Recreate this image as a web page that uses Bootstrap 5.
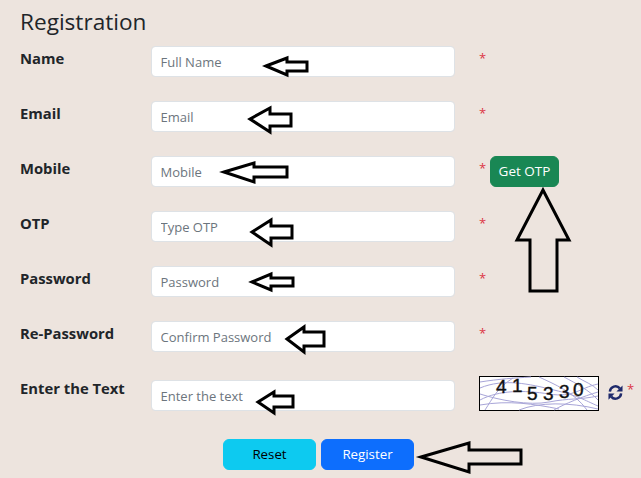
<!DOCTYPE html>
<html lang="en">
<head>
    <meta charset="UTF-8">
    <meta name="viewport" content="width=device-width, initial-scale=1.0">
    <title>Registration</title>
    <link href="https://cdn.jsdelivr.net/npm/bootstrap@5.3.0/dist/css/bootstrap.min.css" rel="stylesheet">
    <style>
        html, body {
            height: 100%;
            overflow: hidden;
        }
        body {
            background-color: #ede4de;
            font-family: "Open Sans", "Noto Sans", sans-serif;
            color: #212529;
            position: relative;
        }
        .page-wrap {
            padding: 7px 0 0 20px;
        }
        .page-title {
            font-size: 22.6px;
            line-height: 30px;
            font-weight: 400;
            margin: 0 0 9px;
            color: #212529;
        }
        .reg-row {
            height: 31px;
            margin-bottom: 24px;
        }
        .reg-row.captcha-row {
            height: 35px;
            margin-top: 24px;
            margin-bottom: 0;
        }
        .reg-label {
            width: 131px;
            flex: none;
            font-size: 14.8px;
            font-weight: 700;
            line-height: 24px;
            margin: 0;
        }
        .reg-input {
            width: 304px;
            flex: none;
            height: 31px;
            min-height: 31px;
            padding: 0 9px 0 8.5px;
            font-size: 13px;
            border-radius: 4px;
        }
        .reg-input::placeholder {
            color: #6c757d;
        }
        .captcha-row .reg-input {
            margin-top: 4px;
        }
        .req-star {
            color: #dc3545;
            font-size: 13px;
            line-height: 18px;
            width: 11px;
            margin: 3px 0 0 24px;
            flex: none;
        }
        .otp-btn {
            width: 69px;
            height: 31px;
            padding: 0;
            font-size: 13.5px;
            margin-left: 0;
        }
        .captcha-pic {
            display: block;
            width: 120px;
            height: 35px;
            margin-left: 24px;
            flex: none;
        }
        .refresh-icon {
            display: block;
            width: 15px;
            height: 15px;
            margin: 9px 0 0 9px;
            flex: none;
        }
        .captcha-star {
            color: #dc3545;
            font-size: 13px;
            line-height: 18px;
            margin: 4px 0 0 4px;
        }
        .form-actions {
            margin-top: 28px;
            padding-left: 203px;
            gap: 5px;
        }
        .form-actions .btn {
            width: 93px;
            height: 31px;
            padding: 0;
            font-size: 13.3px;
        }
        .arrow-layer {
            position: absolute;
            left: 0;
            top: 0;
            pointer-events: none;
        }
        .arrow-layer polygon {
            fill: none;
            stroke: #000;
            stroke-width: 3;
            stroke-linejoin: miter;
        }
    </style>
</head>
<body>
    <div class="page-wrap">
        <h1 class="page-title">Registration</h1>
        <form>
            <div class="reg-row d-flex align-items-start">
                <label class="reg-label" for="fullname">Name</label>
                <input type="text" class="form-control reg-input" id="fullname" placeholder="Full Name">
                <span class="req-star">*</span>
            </div>
            <div class="reg-row d-flex align-items-start">
                <label class="reg-label" for="email">Email</label>
                <input type="text" class="form-control reg-input" id="email" placeholder="Email">
                <span class="req-star">*</span>
            </div>
            <div class="reg-row d-flex align-items-start">
                <label class="reg-label" for="mobile">Mobile</label>
                <input type="text" class="form-control reg-input" id="mobile" placeholder="Mobile">
                <span class="req-star">*</span>
                <button type="button" class="btn btn-success otp-btn">Get OTP</button>
            </div>
            <div class="reg-row d-flex align-items-start">
                <label class="reg-label" for="otp">OTP</label>
                <input type="text" class="form-control reg-input" id="otp" placeholder="Type OTP">
                <span class="req-star">*</span>
            </div>
            <div class="reg-row d-flex align-items-start">
                <label class="reg-label" for="password">Password</label>
                <input type="password" class="form-control reg-input" id="password" placeholder="Password">
                <span class="req-star">*</span>
            </div>
            <div class="reg-row d-flex align-items-start">
                <label class="reg-label" for="repassword">Re-Password</label>
                <input type="password" class="form-control reg-input" id="repassword" placeholder="Confirm Password">
                <span class="req-star">*</span>
            </div>
            <div class="reg-row captcha-row d-flex align-items-start">
                <label class="reg-label" for="captcha">Enter the Text</label>
                <input type="text" class="form-control reg-input" id="captcha" placeholder="Enter the text">
                <svg class="captcha-pic" viewBox="0 0 120 35" xmlns="http://www.w3.org/2000/svg">
                    <rect x="0.5" y="0.5" width="119" height="34" fill="#fff" stroke="#000"/>
                    <g fill="none" stroke="#a8a5d8" stroke-width="1">
                        <path d="M1 12C25 2 50 8 75 14S105 24 119 30"/>
                        <path d="M1 24C20 14 45 14 70 18S100 12 119 8"/>
                        <path d="M1 29C30 24 55 28 80 33"/>
                        <path d="M1 18C20 24 50 30 70 26S100 24 119 20"/>
                        <path d="M6 34C14 22 18 12 34 2"/>
                        <path d="M60 1C75 8 95 16 108 34"/>
                        <path d="M85 1C98 8 110 14 119 24"/>
                        <path d="M1 6C20 3 35 2 52 1"/>
                        <path d="M40 34C60 26 90 26 119 33"/>
                        <path d="M98 1C106 6 113 8 119 14"/>
                        <path d="M75 34C85 28 105 20 119 16"/>
                    </g>
                    <g fill="#111" font-family="Liberation Sans, sans-serif" font-size="19" stroke="#111" stroke-width="0.4">
                        <text x="17" y="17">4</text>
                        <text x="33" y="16">1</text>
                        <text x="48" y="24">5</text>
                        <text x="64" y="24">3</text>
                        <text x="80" y="22">3</text>
                        <text x="94" y="20">0</text>
                    </g>
                </svg>
                <svg class="refresh-icon" viewBox="0 0 16 16" xmlns="http://www.w3.org/2000/svg">
                    <g fill="none" stroke="#1f2a6b" stroke-width="2.6">
                        <path d="M2 7A6 6 0 0 1 12.6 3.6"/>
                        <path d="M14 9A6 6 0 0 1 3.4 12.4"/>
                    </g>
                    <path fill="#1f2a6b" d="M15.5 0.4V7H9zM.5 15.6V9H7z"/>
                </svg>
                <span class="captcha-star">*</span>
            </div>
            <div class="form-actions d-flex">
                <button type="reset" class="btn btn-info">Reset</button>
                <button type="submit" class="btn btn-primary">Register</button>
            </div>
        </form>
    </div>

    <svg class="arrow-layer" width="641" height="478" xmlns="http://www.w3.org/2000/svg">
        <polygon points="266,66 287,58 287,62 307,62 307,71 287,71 287,75"/>
        <polygon points="250,119 270,108 270,114 291,114 291,126 270,126 270,132"/>
        <polygon points="224,172 254,163 254,167 287,167 287,177 254,177 254,182"/>
        <polygon points="252,232 271,220 271,226 292,226 292,238 271,238 271,245"/>
        <polygon points="252,282 271,274 271,278 293,278 293,286 271,286 271,290"/>
        <polygon points="287,339 304,327 304,332 324,332 324,346 304,346 304,352"/>
        <polygon points="258,402 274,392 274,396 293,396 293,407 274,407 274,413"/>
        <polygon points="543,190 517,240 530,240 530,291 557,291 557,240 569,240"/>
        <polygon points="421,457 469,443 469,450 521,450 521,464 469,464 469,472"/>
    </svg>

    <script src="https://cdn.jsdelivr.net/npm/bootstrap@5.3.0/dist/js/bootstrap.bundle.min.js"></script>
</body>
</html>
